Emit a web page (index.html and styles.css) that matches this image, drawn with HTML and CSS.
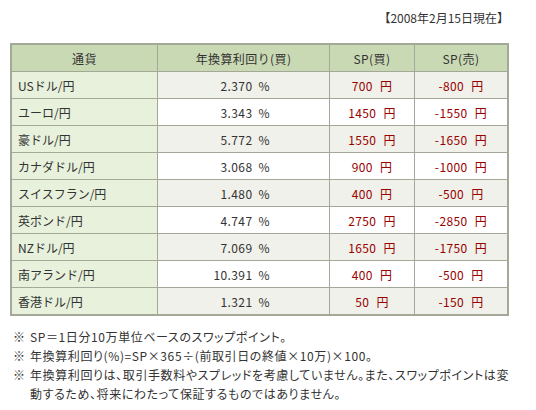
FILE: index.html
```html
<!DOCTYPE html>
<html lang="ja">
<head>
<meta charset="UTF-8">
<title>スワップポイント</title>
<link rel="stylesheet" href="styles.css">
</head>
<body>
<div class="container">
    <p class="date">【2008年2月15日現在】</p>
    <table class="swap">
        <tr>
            <th class="c-name">通貨</th>
            <th class="c-rate">年換算利回り(買)</th>
            <th class="c-buy">SP(買)</th>
            <th class="c-sell">SP(売)</th>
        </tr>
        <tr class="alt"><td class="name">USドル/円</td><td class="rate">2.370 %</td><td class="sp">700 円</td><td class="sp">-800 円</td></tr>
        <tr><td class="name">ユーロ/円</td><td class="rate">3.343 %</td><td class="sp">1450 円</td><td class="sp">-1550 円</td></tr>
        <tr class="alt"><td class="name">豪ドル/円</td><td class="rate">5.772 %</td><td class="sp">1550 円</td><td class="sp">-1650 円</td></tr>
        <tr><td class="name">カナダドル/円</td><td class="rate">3.068 %</td><td class="sp">900 円</td><td class="sp">-1000 円</td></tr>
        <tr class="alt"><td class="name">スイスフラン/円</td><td class="rate">1.480 %</td><td class="sp">400 円</td><td class="sp">-500 円</td></tr>
        <tr><td class="name">英ポンド/円</td><td class="rate">4.747 %</td><td class="sp">2750 円</td><td class="sp">-2850 円</td></tr>
        <tr class="alt"><td class="name">NZドル/円</td><td class="rate">7.069 %</td><td class="sp">1650 円</td><td class="sp">-1750 円</td></tr>
        <tr><td class="name">南アランド/円</td><td class="rate">10.391 %</td><td class="sp">400 円</td><td class="sp">-500 円</td></tr>
        <tr class="alt"><td class="name">香港ドル/円</td><td class="rate">1.321 %</td><td class="sp">50 円</td><td class="sp">-150 円</td></tr>
    </table>
    <ul class="notes">
        <li><span class="mark">※</span><span>SP＝1日分10万単位ベースのスワップポイント。</span></li>
        <li><span class="mark">※</span><span>年換算利回り(%)=SP×365÷(前取引日の終値×10万)×100。</span></li>
        <li><span class="mark">※</span><span>年換算利回りは、取引手数料やスプレッドを考慮していません。また、スワップポイントは変動するため、将来にわたって保証するものではありません。</span></li>
    </ul>
</div>
</body>
</html>
```

FILE: styles.css
```css
body {
    margin: 0;
    font-family: 'Noto Sans CJK JP', 'Liberation Sans', sans-serif;
    font-size: 12px;
    color: #333;
    background-color: #fff;
}
.container {
    width: 499px;
    padding: 10px 0 0 10px;
}
.date {
    margin: 0 0 17px;
    text-align: right;
    line-height: 16px;
}
.swap {
    width: 499px;
    border-collapse: collapse;
    border: 2px solid #a3a898;
    letter-spacing: 0.4px;
}
.swap th,
.swap td {
    border: 1px solid #a3a898;
    height: 26px;
    padding: 0;
    font-weight: normal;
}
.swap th {
    background-color: #c9d9b3;
    text-align: center;
}
.c-name { width: 145px; }
.c-rate { width: 171px; }
.c-buy { width: 84px; }
.swap td.name {
    background-color: #e7f1dc;
    padding-left: 6px;
    letter-spacing: 0;
}
.swap tr.alt td {
    background-color: #eff1ea;
}
.swap tr.alt td.name {
    background-color: #e7f1dc;
}
.swap td.rate {
    text-align: right;
    padding-right: 59px;
    word-spacing: 3px;
}
.swap td.sp {
    text-align: center;
    color: #990000;
    word-spacing: 4px;
}
.notes {
    list-style: none;
    margin: 11px 0 0;
    padding: 0 0 0 3px;
    width: 500px;
    font-feature-settings: "palt";
    letter-spacing: 0.6px;
}
.notes li {
    display: flex;
    line-height: 19px;
}
.notes .mark {
    flex: none;
    width: 17px;
    letter-spacing: 0;
}
```
